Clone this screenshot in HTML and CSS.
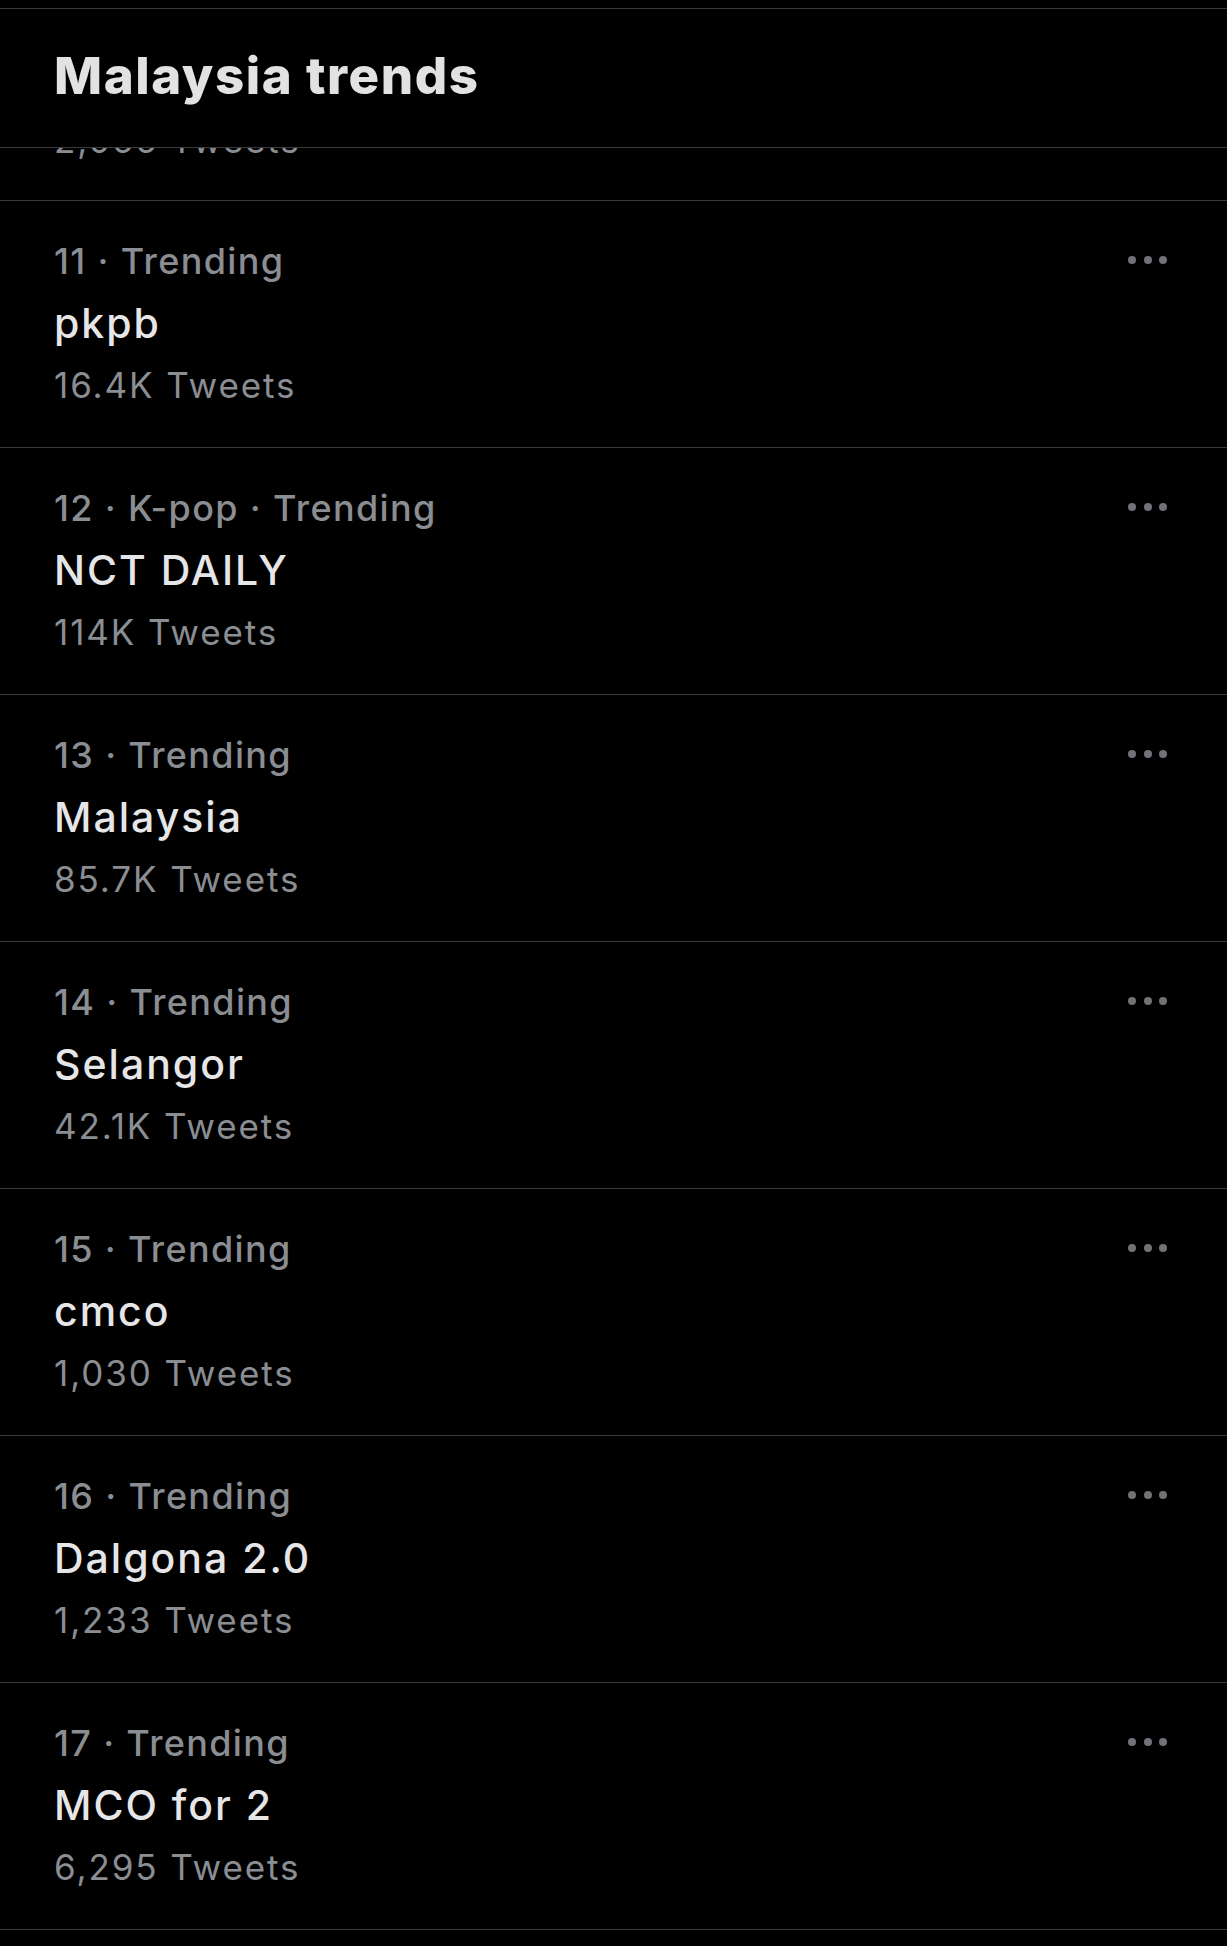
FILE: index.html
```html
<!DOCTYPE html>
<html lang="en">
<head>
<meta charset="utf-8">
<title>Malaysia trends</title>
<link rel="stylesheet" href="styles.css">
</head>
<body>
<div class="page">
  <header class="header">
    <h1 class="header-title">Malaysia trends</h1>
  </header>
  <div class="row-cut">
    <div class="cut-count">2,055 Tweets</div>
  </div>
  <ul class="trends">
    <li class="trend">
      <div class="trend-body">
        <div class="meta">11 · Trending</div>
        <div class="name">pkpb</div>
        <div class="count">16.4K Tweets</div>
      </div>
      <div class="more"><span></span><span></span><span></span></div>
    </li>
    <li class="trend">
      <div class="trend-body">
        <div class="meta">12 · K-pop · Trending</div>
        <div class="name">NCT DAILY</div>
        <div class="count">114K Tweets</div>
      </div>
      <div class="more"><span></span><span></span><span></span></div>
    </li>
    <li class="trend">
      <div class="trend-body">
        <div class="meta">13 · Trending</div>
        <div class="name">Malaysia</div>
        <div class="count">85.7K Tweets</div>
      </div>
      <div class="more"><span></span><span></span><span></span></div>
    </li>
    <li class="trend">
      <div class="trend-body">
        <div class="meta">14 · Trending</div>
        <div class="name">Selangor</div>
        <div class="count">42.1K Tweets</div>
      </div>
      <div class="more"><span></span><span></span><span></span></div>
    </li>
    <li class="trend">
      <div class="trend-body">
        <div class="meta">15 · Trending</div>
        <div class="name">cmco</div>
        <div class="count">1,030 Tweets</div>
      </div>
      <div class="more"><span></span><span></span><span></span></div>
    </li>
    <li class="trend">
      <div class="trend-body">
        <div class="meta">16 · Trending</div>
        <div class="name">Dalgona 2.0</div>
        <div class="count">1,233 Tweets</div>
      </div>
      <div class="more"><span></span><span></span><span></span></div>
    </li>
    <li class="trend">
      <div class="trend-body">
        <div class="meta">17 · Trending</div>
        <div class="name">MCO for 2</div>
        <div class="count">6,295 Tweets</div>
      </div>
      <div class="more"><span></span><span></span><span></span></div>
    </li>
  </ul>
</div>
</body>
</html>
```

FILE: styles.css
```css
html, body {
  margin: 0;
  padding: 0;
  background: #000;
}
body {
  font-family: Inter, "Noto Sans", "Liberation Sans", sans-serif;
  color: #e4e4e6;
}
.page {
  padding-top: 8px;
  width: 1227px;
  min-height: 1938px;
  background: #000;
}
.header {
  border-top: 1px solid #3a3a3c;
  border-bottom: 1px solid #3a3a3c;
  padding: 37px 0 41px 54px;
  background: #000;
}
.header-title {
  margin: 0;
  font-size: 51px;
  line-height: 60px;
  font-weight: 800;
  color: #e2e2e4;
  letter-spacing: 1.55px;
}
.row-cut {
  height: 52px;
  overflow: hidden;
  border-bottom: 1px solid #3a3a3c;
  padding-left: 54px;
}
.cut-count {
  margin-top: -32px;
  font-size: 35px;
  line-height: 48px;
  color: #8a8d92;
  letter-spacing: 1.9px;
}
.trends {
  list-style: none;
  margin: 0;
  padding: 0;
}
.trend {
  display: flex;
  justify-content: space-between;
  align-items: flex-start;
  height: 246px;
  box-sizing: content-box;
  border-bottom: 1px solid #3a3a3c;
  padding-left: 54px;
  padding-right: 60px;
}
.trend-body {
  padding-top: 36px;
}
.meta {
  font-size: 36px;
  line-height: 48px;
  font-weight: 500;
  color: #8a8d92;
  letter-spacing: 1.35px;
}
.name {
  font-size: 41px;
  line-height: 76px;
  font-weight: 500;
  color: #e6e6e8;
  letter-spacing: 2px;
}
.count {
  font-size: 35px;
  line-height: 48px;
  font-weight: 400;
  color: #8a8d92;
  letter-spacing: 1.9px;
}
.more {
  display: flex;
  gap: 7.5px;
  margin-top: 55px;
}
.more span {
  width: 8px;
  height: 8px;
  border-radius: 50%;
  background: #6f7276;
}
```
